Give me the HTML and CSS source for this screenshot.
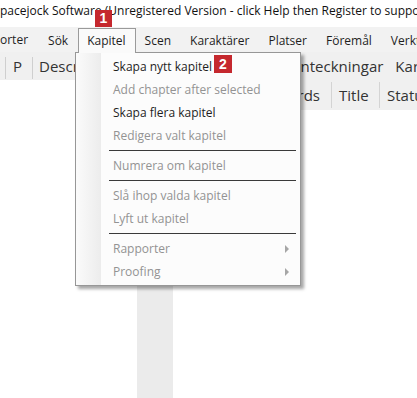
FILE: index.html
```html
<!DOCTYPE html>
<html lang="sv">
<head>
    <meta charset="UTF-8">
    <meta name="viewport" content="width=device-width, initial-scale=1.0">
    <title>yWriter - Kapitel</title>
    <link rel="stylesheet" href="styles.css">
</head>
<body>
    <div class="window">
        <div class="titlebar">pacejock Software (Unregistered Version - click Help then Register to support development)</div>

        <div class="menubar">
            <span class="menu-item first">orter</span>
            <span class="menu-item">Sök</span>
            <span class="menu-item open">Kapitel</span>
            <span class="menu-item">Scen</span>
            <span class="menu-item">Karaktärer</span>
            <span class="menu-item">Platser</span>
            <span class="menu-item">Föremål</span>
            <span class="menu-item">Verktyg</span>
        </div>

        <div class="toolbar">
            <span class="tool-sep"></span>
            <span class="tool-tab narrow">P</span>
            <span class="tool-sep"></span>
            <span class="tool-tab wide">Description</span>
            <span class="tool-tab">Anteckningar</span>
            <span class="tool-tab">Karaktärer</span>
        </div>

        <div class="workspace">
            <div class="left-pane">
                <div class="splitter"></div>
            </div>
            <div class="right-pane">
                <div class="grid-header">
                    <span class="col words">Words</span>
                    <span class="col title">Title</span>
                    <span class="col">Status</span>
                </div>
            </div>
        </div>

        <div class="dropdown">
            <div class="dd-item">Skapa nytt kapitel</div>
            <div class="dd-item disabled">Add chapter after selected</div>
            <div class="dd-item">Skapa flera kapitel</div>
            <div class="dd-item disabled">Redigera valt kapitel</div>
            <div class="dd-sep"></div>
            <div class="dd-item disabled">Numrera om kapitel</div>
            <div class="dd-sep"></div>
            <div class="dd-item disabled">Slå ihop valda kapitel</div>
            <div class="dd-item disabled">Lyft ut kapitel</div>
            <div class="dd-sep"></div>
            <div class="dd-item disabled sub">Rapporter</div>
            <div class="dd-item disabled sub">Proofing</div>
        </div>

        <span class="badge badge-one">1</span>
        <span class="badge badge-two">2</span>
    </div>
</body>
</html>
```

FILE: styles.css
```css
* {
    box-sizing: border-box;
}

body {
    margin: 0;
    padding: 0;
    background: #ffffff;
    font-family: 'Open Sans', 'Noto Sans', sans-serif;
    color: #1e1e1e;
}

.window {
    position: relative;
    width: 417px;
    height: 398px;
    overflow: hidden;
    display: flex;
    flex-direction: column;
}

.titlebar {
    flex-shrink: 0;
    height: 27px;
    padding: 3px 0 0 0;
    font-size: 12px;
    line-height: 16px;
    white-space: nowrap;
    color: #111;
    background: #ffffff;
}

.menubar {
    flex-shrink: 0;
    height: 25px;
    display: flex;
    align-items: flex-start;
    background: #f2f2f2;
    white-space: nowrap;
    font-size: 12px;
}

.menu-item {
    flex-shrink: 0;
    height: 24px;
    margin-top: 1px;
    padding: 0 9px 0 8px;
    line-height: 23px;
    border: 1px solid transparent;
    border-bottom: none;
}

.menu-item.first {
    padding: 0 11px 0 0;
    border: none;
}

.menu-item.open {
    position: relative;
    z-index: 3;
    height: 25px;
    border-color: #9a9a9a;
    background: #fafafa;
}

.toolbar {
    flex-shrink: 0;
    height: 28px;
    display: flex;
    align-items: center;
    background: #f0f0f0;
    white-space: nowrap;
    font-size: 15px;
    color: #333;
}

.tool-sep {
    flex-shrink: 0;
    width: 1px;
    height: 22px;
    margin: 3px 0 0 5px;
    background: #cfcfcf;
}

.tool-tab {
    flex-shrink: 0;
    padding: 0 6px;
}

.tool-tab.narrow {
    padding: 0 5px 0 7px;
}

.tool-tab.wide {
    width: 252px;
}

.workspace {
    flex: 1;
    display: flex;
}

.left-pane {
    flex-shrink: 0;
    width: 180px;
    padding-left: 137px;
    background: #ffffff;
}

.splitter {
    width: 36px;
    height: 100%;
    background: #ebebeb;
}

.right-pane {
    flex: 1;
    min-width: 0;
    background: #ffffff;
}

.grid-header {
    height: 30px;
    display: flex;
    align-items: center;
    background: #f0f0f0;
    white-space: nowrap;
    font-size: 15px;
    color: #333;
}

.col {
    flex-shrink: 0;
    height: 26px;
    line-height: 26px;
    padding: 0 7px;
    border-right: 1px solid #d4d4d4;
}

.col.words {
    width: 152px;
    padding-right: 11px;
    text-align: right;
}

.col.title {
    width: 48px;
}

.dropdown {
    position: absolute;
    left: 75px;
    top: 52px;
    z-index: 2;
    width: 226px;
    height: 234px;
    padding: 2px 2px 2px 1px;
    border: 1px solid #979797;
    background:
        linear-gradient(to right, #fbfbfb, #ececec) no-repeat 0 0 / 25px 100%,
        #fcfcfc;
    box-shadow: 3px 3px 3px rgba(0, 0, 0, 0.35);
    font-size: 12px;
}

.dd-item {
    position: relative;
    height: 23px;
    line-height: 23px;
    padding-left: 36px;
    white-space: nowrap;
    color: #1e1e1e;
}

.dd-item.disabled {
    color: #939393;
}

.dd-item.sub::after {
    content: "";
    position: absolute;
    right: 9px;
    top: 8px;
    border-left: 4px solid #a6a6a6;
    border-top: 4px solid transparent;
    border-bottom: 4px solid transparent;
}

.dd-sep {
    height: 7px;
    margin: 0 2px 0 32px;
    border-top: 3px solid transparent;
    background: linear-gradient(#3a3a3a, #3a3a3a) no-repeat 0 0 / 100% 1px;
    background-origin: padding-box;
}

.badge {
    position: absolute;
    z-index: 4;
    width: 17px;
    height: 17px;
    background: #c5282e;
    color: #ffffff;
    font-family: 'Liberation Sans', Arial, sans-serif;
    font-weight: bold;
    font-size: 14px;
    line-height: 17px;
    text-align: center;
}

.badge-one {
    left: 95px;
    top: 10px;
}

.badge-two {
    left: 214px;
    top: 55px;
    width: 18px;
    height: 18px;
    line-height: 18px;
}
```
